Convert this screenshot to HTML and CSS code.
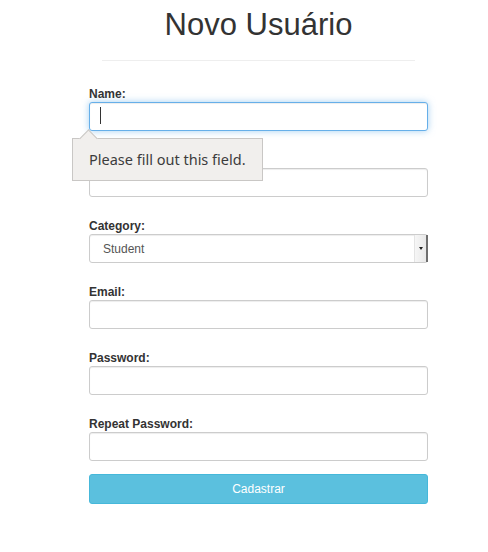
FILE: index.html
```html
<!DOCTYPE html>
<html lang="pt">
<head>
<meta charset="utf-8">
<title>Novo Usuário</title>
<link rel="stylesheet" href="styles.css">
</head>
<body>
<main class="page">
  <h1 class="title">Novo Usuário</h1>
  <hr class="rule">
  <form class="form">
    <div class="group">
      <label class="label">Name:</label>
      <div class="field-wrap">
        <input class="input input-focus" type="text">
        <span class="caret"></span>
        <div class="bubble">Please fill out this field.</div>
      </div>
    </div>
    <div class="group">
      <label class="label">Username:</label>
      <input class="input" type="text">
    </div>
    <div class="group">
      <label class="label">Category:</label>
      <div class="field-wrap">
        <select class="input select">
          <option>Student</option>
        </select>
        <span class="select-btn"><span class="select-arrow"></span></span>
      </div>
    </div>
    <div class="group">
      <label class="label">Email:</label>
      <input class="input" type="email">
    </div>
    <div class="group">
      <label class="label">Password:</label>
      <input class="input" type="password">
    </div>
    <div class="group group-last">
      <label class="label">Repeat Password:</label>
      <input class="input" type="password">
    </div>
    <button class="btn" type="button">Cadastrar</button>
  </form>
</main>
</body>
</html>
```
FILE: styles.css
```css
html, body {
  margin: 0;
  padding: 0;
  background: #fff;
}

body {
  font-family: "Liberation Sans", Arial, sans-serif;
  color: #333;
  font-size: 12px;
}

.page {
  width: 339px;
  margin-left: 89px;
  padding-top: 8px;
}

.title {
  margin: 0;
  font-size: 31px;
  line-height: 34px;
  font-weight: 400;
  text-align: center;
  color: #333;
}

.rule {
  margin: 18px 13px 0;
  border: 0;
  border-top: 1px solid #eee;
  height: 0;
}

.form {
  display: flex;
  flex-direction: column;
  padding-top: 26px;
}

.group {
  display: flex;
  flex-direction: column;
  margin-bottom: 22px;
}

.group-last {
  margin-bottom: 13px;
}

.label {
  font-weight: 700;
  font-size: 12px;
  line-height: 14px;
  padding-bottom: 1px;
  color: #333;
}

.field-wrap {
  position: relative;
}

.input {
  display: block;
  box-sizing: border-box;
  width: 100%;
  height: 29px;
  margin: 0;
  padding: 0 13px;
  font-family: "Liberation Sans", Arial, sans-serif;
  font-size: 12px;
  color: #555;
  background: #fff;
  border: 1px solid #ccc;
  border-radius: 3px;
  box-shadow: inset 0 1px 1px rgba(0, 0, 0, 0.075);
  outline: none;
}

.input-focus {
  border-color: #66afe9;
  box-shadow: inset 0 1px 1px rgba(0, 0, 0, 0.075), 0 0 7px rgba(102, 175, 233, 0.6);
}

.caret {
  position: absolute;
  left: 11px;
  top: 5px;
  width: 1px;
  height: 17px;
  background: #333;
}

.select {
  -webkit-appearance: none;
  appearance: none;
  padding-left: 13px;
}

.select-btn {
  position: absolute;
  top: 1px;
  bottom: 1px;
  right: 0;
  width: 11px;
  background: linear-gradient(to right, #f6f6f6, #e8e8e8);
  border-left: 1px solid #e4e4e4;
  border-right: 2px solid #6e6e6e;
  display: flex;
  align-items: center;
  justify-content: center;
}

.select-arrow {
  width: 0;
  height: 0;
  border-left: 2.5px solid transparent;
  border-right: 2.5px solid transparent;
  border-top: 3px solid #222;
}

.bubble {
  position: absolute;
  z-index: 5;
  left: -17px;
  top: 36px;
  box-sizing: border-box;
  width: 191px;
  height: 43px;
  padding: 10px 0 0 16px;
  background: #f1efed;
  border: 1px solid #c9c7c5;
  font-family: "Noto Sans", "Open Sans", sans-serif;
  font-size: 14.5px;
  line-height: 20px;
  color: #3c3c3c;
  white-space: nowrap;
}

.bubble::before {
  content: "";
  position: absolute;
  left: 9px;
  top: -7.5px;
  width: 12px;
  height: 12px;
  background: #f1efed;
  border-top: 1px solid #c9c7c5;
  border-left: 1px solid #c9c7c5;
  transform: rotate(45deg);
}

.btn {
  box-sizing: border-box;
  width: 100%;
  height: 30px;
  margin: 0;
  padding: 0;
  font-family: "Liberation Sans", Arial, sans-serif;
  font-size: 12px;
  color: #fff;
  background: #5bc0de;
  border: 1px solid #46b8da;
  border-radius: 3px;
}
```
